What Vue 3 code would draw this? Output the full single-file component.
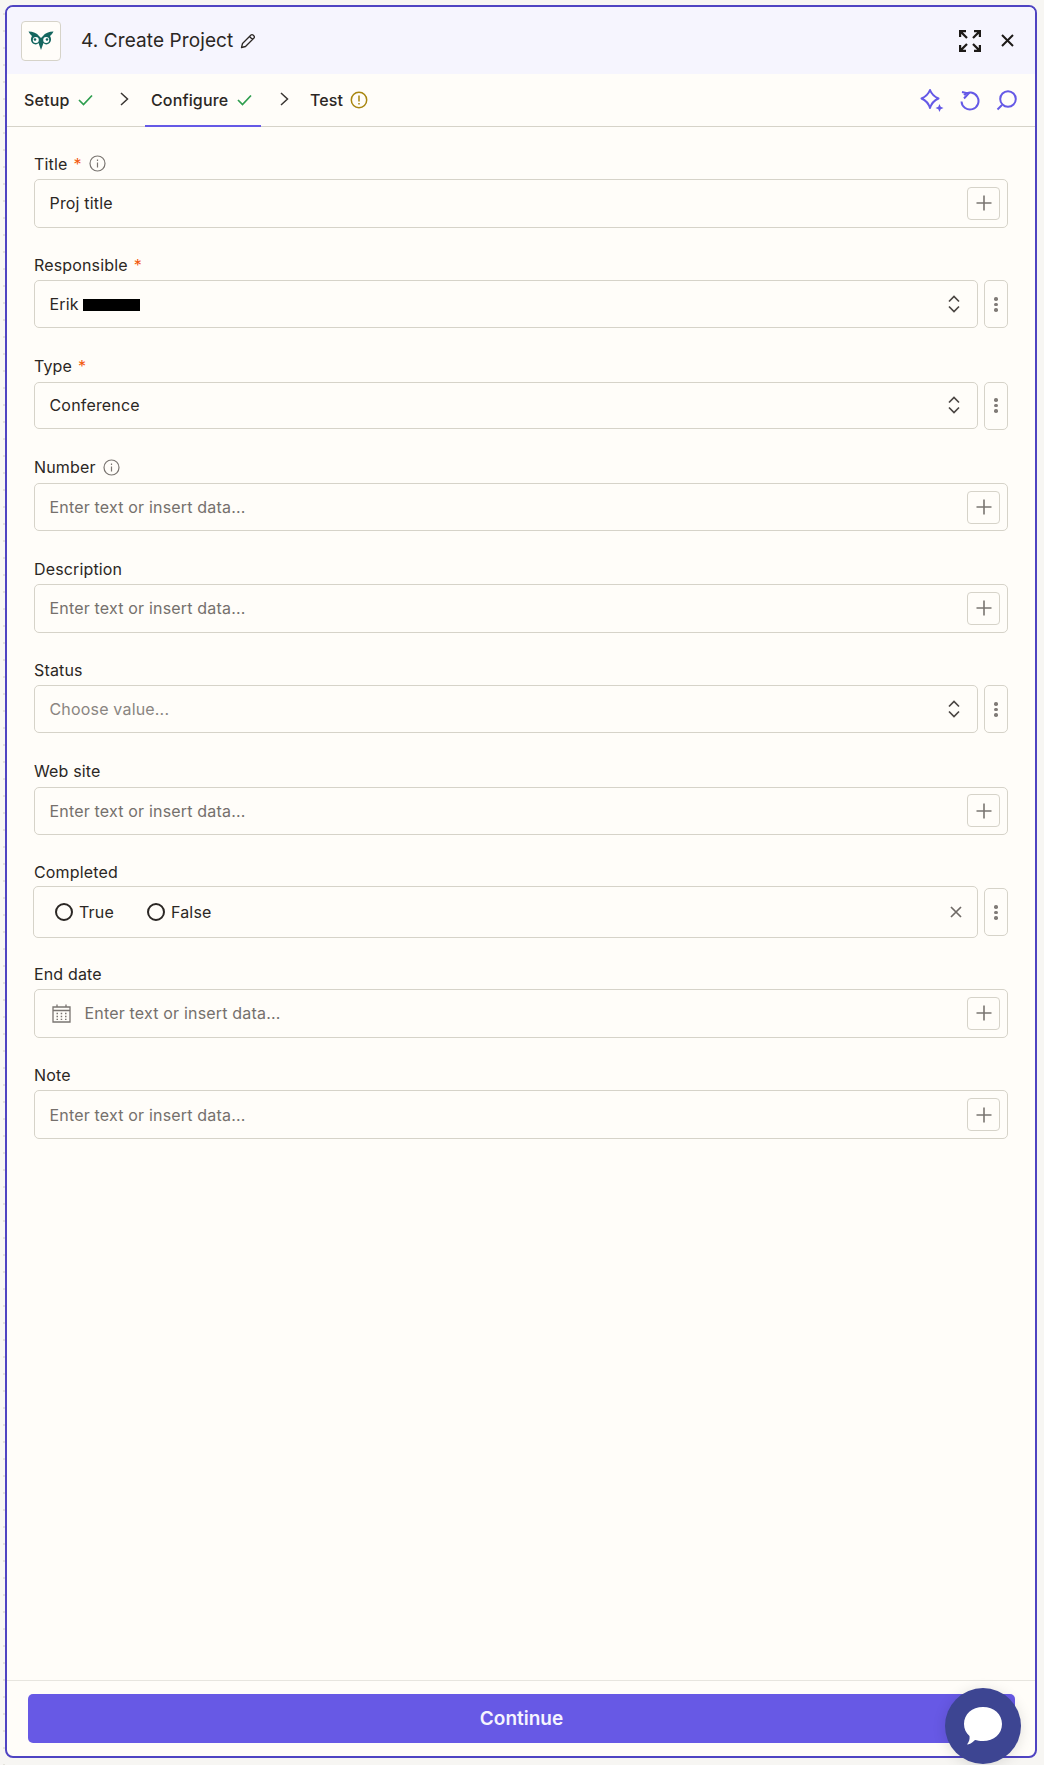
<script setup>
const fields = [
  { label: 'Title', req: true, info: true, kind: 'text', value: 'Proj title' },
  { label: 'Responsible', req: true, kind: 'select', value: 'Erik', redact: true },
  { label: 'Type', req: true, kind: 'select', value: 'Conference' },
  { label: 'Number', info: true, kind: 'text' },
  { label: 'Description', kind: 'text' },
  { label: 'Status', kind: 'select', placeholder: 'Choose value...' },
  { label: 'Web site', kind: 'text' },
  { label: 'Completed', kind: 'radio' },
  { label: 'End date', kind: 'text', calendar: true },
  { label: 'Note', kind: 'text' },
]
</script>

<template>
  <div class="page">
    <div class="panel">
      <header class="head">
        <div class="logo">
          <svg width="26" height="22" viewBox="0 0 26 22" fill="#14665f">
            <path d="M0.500 1.500 C5 1.500 9 3 11 6 L13 8 L15 6 C17 3 21 1.500 25.500 1.500 C24.500 3.500 23 5 22 6 C24 9 23 13 20 14 C18 15 16.500 14 15.500 13 L13 20 L10.500 13 C9.500 14 8 15 6 14 C3 13 2 9 4 6 C3 5 1.500 3.500 0.500 1.500 Z" />
            <circle cx="7.800" cy="10" r="3" fill="#fff" />
            <circle cx="18.200" cy="10" r="3" fill="#fff" />
            <circle cx="7" cy="9.500" r="1.300" />
            <circle cx="19" cy="9.500" r="1.300" />
          </svg>
        </div>
        <h1 class="name">4. Create Project</h1>
        <svg class="pencil" width="16" height="16" viewBox="0 0 16 16" fill="none" stroke="#2b2724" stroke-width="1.300" stroke-linejoin="round">
          <path d="M1.500 14.500 L2.500 10.500 L11 2 a1.400 1.400 0 0 1 2 0 L14 3 a1.400 1.400 0 0 1 0 2 L5.500 13.500 Z M9.500 3.500 L12.500 6.500" />
        </svg>
        <div class="head-right">
          <svg width="22" height="22" viewBox="0 0 22 22" fill="none" stroke="#1d1a18" stroke-width="2.200">
            <path d="M1.100 7 V1.100 H7 M1.100 1.100 L8 8 M15 1.100 H20.900 V7 M20.900 1.100 L14 8 M1.100 15 V20.900 H7 M1.100 20.900 L8 14 M15 20.900 H20.900 V15 M20.900 20.900 L14 14" />
          </svg>
          <svg class="close" width="13" height="13" viewBox="0 0 13 13" fill="none" stroke="#1d1a18" stroke-width="2">
            <path d="M1 1 L12 12 M12 1 L1 12" />
          </svg>
        </div>
      </header>

      <nav class="tabs">
        <span class="tab first">Setup
          <svg class="check" width="15" height="12" viewBox="0 0 15 12" fill="none" stroke="#2e9e4f" stroke-width="1.700"><path d="M1 6 L5.500 10.500 L14 1.500" /></svg>
        </span>
        <svg class="chev" width="9" height="14" viewBox="0 0 9 14" fill="none" stroke="#3a3633" stroke-width="1.500"><path d="M1 1 L7.500 7 L1 13" /></svg>
        <span class="tab active">Configure
          <svg class="check" width="15" height="12" viewBox="0 0 15 12" fill="none" stroke="#2e9e4f" stroke-width="1.700"><path d="M1 6 L5.500 10.500 L14 1.500" /></svg>
        </span>
        <svg class="chev second" width="9" height="14" viewBox="0 0 9 14" fill="none" stroke="#3a3633" stroke-width="1.500"><path d="M1 1 L7.500 7 L1 13" /></svg>
        <span class="tab test">Test
          <svg class="warn" width="18" height="18" viewBox="0 0 18 18" fill="none" stroke="#a8860f" stroke-width="1.500">
            <circle cx="9" cy="9" r="7.700" />
            <path d="M9 4.500 V10.500 M9 12 V13.500" />
          </svg>
        </span>
        <div class="tools">
          <svg width="24" height="24" viewBox="0 0 24 24" fill="none" stroke="#6559e6" stroke-width="2" stroke-linejoin="round">
            <path d="M10 2 C11.500 6 14 8.500 18.500 10.500 C14 12.500 11.500 15 10 20 C8.500 15 6 12.500 1.500 10.500 C6 8.500 8.500 6 10 2 Z" />
            <path d="M19.500 16 L20.700 18.800 L23.500 20 L20.700 21.200 L19.500 24 L18.300 21.200 L15.500 20 L18.300 18.800 Z" fill="#6559e6" stroke="none" />
          </svg>
          <svg width="20" height="23" viewBox="0 0 20 23" fill="none" stroke="#6559e6" stroke-width="2">
            <path d="M4 6 A8.500 8.500 0 1 1 1.500 12.500" />
            <path d="M3 1 L9.500 2.500 L5 7.500" transform="translate(-1 2)" />
          </svg>
          <svg width="21" height="21" viewBox="0 0 21 21" fill="none" stroke="#6559e6" stroke-width="2">
            <circle cx="12" cy="9" r="7.800" />
            <path d="M6 15 L1.500 19.500" />
          </svg>
        </div>
      </nav>

      <main class="form">
        <div v-for="f in fields" :key="f.label" class="field" :class="{ 'is-radio': f.kind === 'radio' }">
          <label class="label">
            {{ f.label }}
            <span v-if="f.req" class="req">*</span>
            <svg v-if="f.info" class="info" width="17" height="17" viewBox="0 0 17 17" fill="none" stroke="#7a7571" stroke-width="1.200">
              <circle cx="8.500" cy="8.500" r="7.500" />
              <path d="M8.500 7.500 V12.500 M8.500 4.500 V6" />
            </svg>
          </label>

          <div v-if="f.kind === 'text'" class="box text-box">
            <svg v-if="f.calendar" class="cal" width="19" height="19" viewBox="0 0 19 19" fill="none" stroke="#7a7571" stroke-width="1.300">
              <path d="M1 3 H18 V18 H1 Z M1 6.500 H18 M5 0.500 V3 M14 0.500 V3" />
              <path d="M4.500 9.500 H6 M8.700 9.500 H10.200 M13 9.500 H14.500 M4.500 12.500 H6 M8.700 12.500 H10.200 M13 12.500 H14.500 M4.500 15.300 H6 M8.700 15.300 H10.200 M13 15.300 H14.500" />
            </svg>
            <span class="val" :class="{ ph: !f.value }">{{ f.value || 'Enter text or insert data...' }}</span>
            <span class="plus">
              <svg width="16" height="16" viewBox="0 0 16 16" fill="none" stroke="#7a7571" stroke-width="1.600"><path d="M8 0.500 V15.500 M0.500 8 H15.500" /></svg>
            </span>
          </div>

          <div v-else-if="f.kind === 'select'" class="row">
            <div class="box sel-box">
              <span class="val" :class="{ ph2: !f.value }">{{ f.value || f.placeholder }}<i v-if="f.redact" class="redact"></i></span>
              <svg class="updown" width="12" height="18" viewBox="0 0 12 18" fill="none" stroke="#4b4643" stroke-width="1.700"><path d="M1 6.500 L6 1.500 L11 6.500 M1 11.500 L6 16.500 L11 11.500" /></svg>
            </div>
            <span class="kebab"><i></i><i></i><i></i></span>
          </div>

          <div v-else class="row">
            <div class="box radio-box">
              <span class="radio"><i></i>True</span>
              <span class="radio"><i></i>False</span>
              <svg class="clear" width="12" height="12" viewBox="0 0 12 12" fill="none" stroke="#6f6a66" stroke-width="1.700"><path d="M1 1 L11 11 M11 1 L1 11" /></svg>
            </div>
            <span class="kebab"><i></i><i></i><i></i></span>
          </div>
        </div>
      </main>

      <footer class="foot">
        <button class="continue">Continue</button>
      </footer>
    </div>

    <div class="chat">
      <svg width="42" height="42" viewBox="0 0 42 42" fill="#fff">
        <path d="M21 2 C32 2 40 9 40 19 C40 29 32 36 21 36 C18 36 15 35.500 13 35 C10 38 7 39.500 5 39.500 C7 37 8 34 7.500 31 C4 28 2 24 2 19 C2 9 10 2 21 2 Z" />
      </svg>
    </div>
  </div>
</template>

<style>
html, body { margin: 0; background: #f7f6f3; }
</style>

<style scoped>
.page {
  position: relative;
  box-sizing: border-box;
  width: 1044px;
  height: 1765px;
  padding: 5px 7px 7px 5px;
  font-family: Inter, "Liberation Sans", sans-serif;
  color: #2b2724;
  background-color: #f7f6f3;
  background-image: radial-gradient(circle 1.500px at 4px 8px, #e4e2dc 95%, transparent);
  background-size: 8px 17px;
  background-position: 0 6px;
  background-repeat: repeat-y;
  overflow: hidden;
}
.panel {
  box-sizing: border-box;
  height: 100%;
  display: flex;
  flex-direction: column;
  background: #fffdf9;
  border: 2px solid #4f44c2;
  border-radius: 8px;
  overflow: hidden;
}
.head {
  flex: none;
  height: 67px;
  display: flex;
  align-items: center;
  padding: 0 21px 0 14px;
  background: #f6f5fe;
}
.logo {
  box-sizing: border-box;
  width: 40px;
  height: 40px;
  display: flex;
  align-items: center;
  justify-content: center;
  background: #fffdf9;
  border: 1px solid #d6d3c9;
  border-radius: 4px;
}
.name {
  margin: 0 0 0 20px;
  font-size: 19px;
  font-weight: 400;
  letter-spacing: 0.100px;
}
.pencil { margin-left: 7px; }
.head-right {
  margin-left: auto;
  display: flex;
  align-items: center;
  gap: 20px;
}
.tabs {
  flex: none;
  box-sizing: border-box;
  height: 53px;
  display: flex;
  align-items: center;
  padding-right: 18px;
  border-bottom: 1px solid #d6d3c9;
}
.tab {
  display: flex;
  align-items: center;
  height: 100%;
  font-size: 16px;
  letter-spacing: 0.150px;
  font-weight: 500;
  box-sizing: border-box;
}
.first { margin-left: 17px; }
.check { margin-left: 9px; }
.chev { margin-left: 27px; margin-top: -3px; }
.active {
  margin-left: 16px;
  width: 116px;
  padding-left: 5.500px;
  margin-bottom: -1px;
  height: 53px;
  border-bottom: 2px solid #6559e6;
}
.chev.second { margin-left: 19px; }
.test { margin-left: 20.500px; }
.warn { margin-left: 7px; }
.tools {
  margin-left: auto;
  display: flex;
  align-items: center;
  gap: 16px;
}
.form {
  flex: 1;
  padding: 26.600px 27px 0 27px;
  display: flex;
  flex-direction: column;
  gap: 27.250px;
}
.field { min-height: 74px; }
.field.is-radio { height: 74px; }
.label {
  display: flex;
  align-items: center;
  height: 20px;
  margin-bottom: 5.500px;
  font-size: 16px;
  letter-spacing: 0.150px;
  font-weight: 400;
}
.is-radio .label { margin-bottom: 4px; }
.req { color: #f2590d; margin-left: 6px; }
.info { margin-left: 7px; }
.box {
  box-sizing: border-box;
  display: flex;
  align-items: center;
  border: 1.500px solid #d6d3c9;
  border-radius: 5px;
  font-size: 16px;
  letter-spacing: 0.180px;
}
.text-box {
  height: 48.500px;
  padding: 0 7px 0 14.500px;
}
.val { flex: 1; }
.ph { color: #75706c; }
.ph2 { color: #8a8581; }
.plus {
  box-sizing: border-box;
  width: 33px;
  height: 33px;
  display: flex;
  align-items: center;
  justify-content: center;
  border: 1px solid #d6d3c9;
  border-radius: 4px;
}
.cal { margin: 0 13.500px 0 2.500px; }
.row {
  display: flex;
  gap: 6px;
}
.sel-box {
  flex: 1;
  height: 47.500px;
  padding: 0 17px 0 14.500px;
}
.redact {
  display: inline-block;
  width: 57px;
  height: 12px;
  margin-left: 4px;
  background: #000;
  vertical-align: -1px;
}
.kebab {
  box-sizing: border-box;
  flex: none;
  width: 24px;
  height: 48px;
  display: flex;
  flex-direction: column;
  align-items: center;
  justify-content: center;
  gap: 2px;
  border: 1px solid #d6d3c9;
  border-radius: 5px;
}
.kebab i {
  width: 3.500px;
  height: 3.500px;
  border-radius: 50%;
  background: #807b77;
}
.radio-box {
  flex: 1;
  height: 52px;
  margin-left: -1px;
  padding: 0 15px 0 21px;
  gap: 33px;
  border-width: 1px;
}
.is-radio .kebab { margin-top: 2px; }
.radio {
  display: flex;
  align-items: center;
  gap: 6px;
}
.radio i {
  box-sizing: border-box;
  width: 18px;
  height: 18px;
  border: 2px solid #2b2724;
  border-radius: 50%;
}
.clear { margin-left: auto; }
.foot {
  flex: none;
  box-sizing: border-box;
  height: 76px;
  padding: 13px 20px 0 21px;
  border-top: 1px solid #e7e5df;
}
.continue {
  display: block;
  width: 100%;
  height: 49px;
  border: 0;
  border-radius: 5px;
  background: #6759e5;
  color: #f5f4fe;
  font-family: inherit;
  font-size: 19px;
  font-weight: 600;
}
.chat {
  position: absolute;
  left: 945px;
  top: 1688px;
  width: 76px;
  height: 76px;
  display: flex;
  align-items: center;
  justify-content: center;
  border-radius: 50%;
  background: #3d4592;
  box-shadow: 0 2px 14px rgba(0, 0, 0, 0.12);
}
</style>
